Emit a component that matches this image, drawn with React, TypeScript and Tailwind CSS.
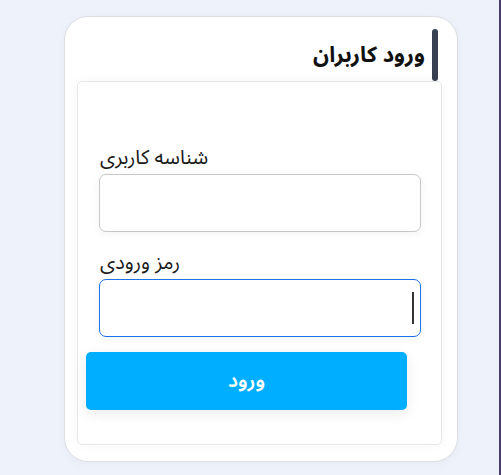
import React from "react";

export default function App() {
  const font = { fontFamily: '"Noto Sans Arabic", "Vazirmatn", "DejaVu Sans", sans-serif' };
  return (
    <div className="relative w-[501px] h-[475px] bg-[#eef2fb] overflow-hidden" style={font}>
      <div className="absolute right-0 top-0 h-full w-[2px] bg-[#4b3f72]" />
      <div className="pl-[64px] pt-[16px]">
        <div className="w-[394px] h-[446px] rounded-[24px] border border-[#dcdee4] bg-white shadow-[0_2px_10px_rgba(0,0,0,0.04)] flex flex-col pl-[12px] pr-[15px] pt-[12px]">
          <div className="flex justify-end items-center h-[52px] gap-[7px] pr-[4px]">
            <span dir="rtl" className="text-[22px] font-bold text-[#111111] leading-none">ورود کاربران</span>
            <div className="w-[6px] h-[52px] rounded-full bg-[#374151]" />
          </div>
          <div className="h-[364px] rounded-[5px] border border-[#e5e7eb] bg-white shadow-[0_0_12px_rgba(0,0,0,0.04)] flex flex-col items-start pt-[63px] pl-[8px] pr-[34px]">
            <span dir="rtl" className="ml-[14px] text-[20px] leading-[26px] text-[#1a1a1a]">شناسه کاربری</span>
            <input dir="rtl" className="ml-[13px] mt-[3px] w-[322px] h-[58px] rounded-[7px] border border-[#c7c7c7] bg-white outline-none shadow-[0_2px_10px_rgba(0,0,0,0.05)]" />
            <span dir="rtl" className="ml-[14px] mt-[18px] text-[20px] leading-[26px] text-[#1a1a1a]">رمز ورودی</span>
            <div className="relative ml-[13px] mt-[3px]">
              <input dir="rtl" className="w-[322px] h-[58px] rounded-[7px] border border-[#1a73e8] bg-white outline-none shadow-[0_2px_10px_rgba(0,0,0,0.05)]" />
              <div className="absolute right-[7px] top-[13px] w-[2px] h-[32px] bg-[#333]" />
            </div>
            <button className="mt-[15px] w-[321px] h-[58px] rounded-[5px] bg-[#00aeff] text-white text-[20px] font-semibold shadow-[0_4px_14px_rgba(0,0,0,0.08)] flex items-center justify-center">
              <span dir="rtl">ورود</span>
            </button>
          </div>
        </div>
      </div>
    </div>
  );
}
